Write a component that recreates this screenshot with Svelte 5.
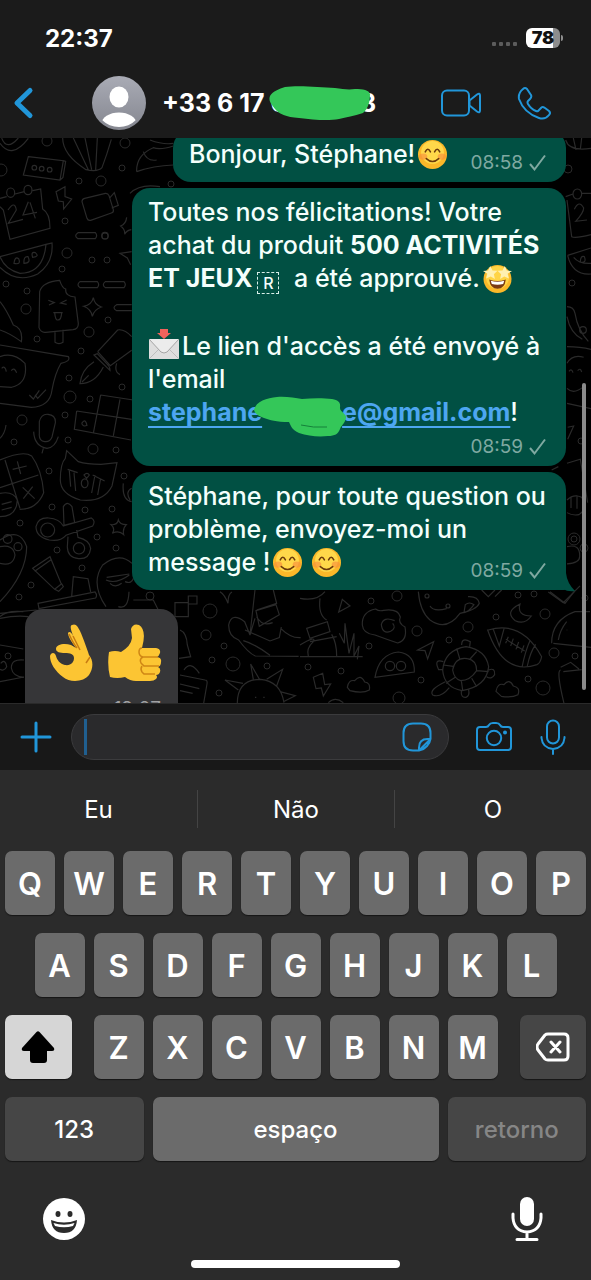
<script>
    const suggestions = ['Eu', 'Não', 'O'];
    const topRow = 'QWERTYUIOP'.split('');
    const middleRow = 'ASDFGHJKL'.split('');
    const bottomRow = 'ZXCVBNM'.split('');

    // small bubbles scattered over the wallpaper: [x, y, r]
    const dots = [
        [47, 3, 5], [1, 32, 6], [125, 5, 5], [122, 30, 3], [79, 43, 3], [101, 43, 5],
        [65, 83, 3], [105, 98, 3], [67, 115, 5], [92, 122, 3], [107, 122, 3], [62, 131, 3],
        [6, 146, 3], [27, 153, 3], [26, 171, 5], [108, 182, 3], [89, 194, 5], [37, 201, 3],
        [81, 213, 3], [69, 240, 3], [122, 249, 3], [70, 259, 6], [90, 261, 3], [65, 277, 3],
        [22, 282, 5], [14, 304, 3], [68, 302, 3], [93, 311, 5], [116, 312, 3], [49, 333, 3],
        [124, 338, 3], [52, 369, 3], [85, 372, 3], [112, 371, 3], [20, 385, 3], [97, 399, 3],
        [57, 412, 3], [116, 410, 3], [82, 430, 3], [31, 447, 3], [19, 459, 3], [8, 518, 3],
        [210, 473, 7], [206, 497, 5], [224, 508, 3], [212, 522, 3], [233, 526, 7], [219, 555, 3],
        [267, 528, 3], [371, 463, 3], [397, 458, 5], [417, 493, 5], [369, 508, 3], [449, 502, 3],
        [468, 489, 5], [496, 479, 3], [545, 476, 5], [554, 515, 5], [575, 518, 3], [528, 541, 3],
        [543, 550, 7], [308, 529, 3], [341, 533, 3], [421, 542, 3], [399, 560, 6], [518, 457, 3],
        [534, 456, 3], [572, 145, 3], [581, 303, 3], [574, 401, 3], [574, 401, 6], [568, 31, 4],
        [584, 410, 4], [585, 460, 3], [150, 458, 4], [171, 46, 3]
    ];
</script>

{#snippet smile()}
    <svg class="emoji" viewBox="0 0 28 28" role="img" aria-label="😊">
        <circle cx="14" cy="14" r="14" fill="#fbb829" />
        <circle cx="14" cy="12" r="11" fill="#ffd84a" />
        <ellipse cx="5" cy="16" rx="4" ry="3" fill="#f98a3c" opacity=".6" />
        <ellipse cx="23" cy="16" rx="4" ry="3" fill="#f98a3c" opacity=".6" />
        <path d="M7 11.500q2.500-5 5 0M16 11.500q2.500-5 5 0M8 18q6 5.500 12 0" fill="none" stroke="#6b3a0c" stroke-width="1.500" stroke-linecap="round" />
    </svg>
{/snippet}

{#snippet check()}
    <svg class="check" viewBox="0 0 18 18" aria-label="Envoyé" role="img">
        <path d="M2 10 6.500 15.500 17 1.500" />
    </svg>
{/snippet}

<main class="screen">
    <header>
        <div class="status">
            <time>22:37</time>
            <div class="indicators">
                <span class="signal"><i></i><i></i><i></i><i></i></span>
                <span class="battery"><b>78</b></span>
            </div>
        </div>
        <div class="contact">
            <button class="back" aria-label="Retour">
                <svg width="22" height="34" viewBox="0 0 22 34"><path d="M18 4.500 5 17l13 12.500" fill="none" stroke="#2196d9" stroke-width="5" stroke-linecap="round" stroke-linejoin="round" /></svg>
            </button>
            <svg class="avatar" viewBox="0 0 54 54" role="img" aria-label="Photo du contact">
                <defs>
                    <linearGradient id="grey" x2="0" y2="1"><stop stop-color="#a9abb5" /><stop offset="1" stop-color="#858790" /></linearGradient>
                    <clipPath id="round"><circle cx="27" cy="27" r="24" /></clipPath>
                </defs>
                <circle cx="27" cy="27" r="27" fill="url(#grey)" />
                <g fill="#fff" clip-path="url(#round)"><ellipse cx="27" cy="21" rx="9.500" ry="10.500" /><ellipse cx="27" cy="48" rx="17.500" ry="11.500" /></g>
            </svg>
            <h1>+33 6 17 0<span class="hidden-digits"><svg class="scribble" width="102" height="36" viewBox="0 0 102 36"><path d="M1 11C4 6 10 4 16 2c12-2 35 0 50 1 8 1 13 2 20 1 8 0 14 1 15 5 0 8-2 15-7 19-9 3-17 4-24 6-10 2-25 1-40-1-13-1-20-4-24-9C3 20-1 16 1 11z" /></svg></span>13</h1>
            <button class="call" aria-label="Appel vidéo">
                <svg width="40" height="28" viewBox="0 0 40 28"><rect x="1" y="1.500" width="27" height="25" rx="5" /><path d="M28.500 11.500 36 5.500q3-2 3 1v15q0 3-3 1l-7.500-6z" /></svg>
            </button>
            <button class="call" aria-label="Appel vocal">
                <svg width="34" height="34" viewBox="0 0 34 34"><path d="M6 3q2-2 4 0l4 6q1 2-1 4l-2 2q-1 1 0 3 3 5 8 7 2 1 3-1l2-2q1-2 4 0l4 3q2 2 0 4-4 5-10 3Q7 27 2 13 1 7 6 3z" /></svg>
            </button>
        </div>
    </header>

    <section class="chat">
        <svg class="wallpaper" viewBox="0 0 591 565" preserveAspectRatio="xMinYMin slice" aria-hidden="true">
            {#each dots as [x, y, r]}
                <circle cx={x} cy={y} r={r} />
            {/each}
            <!-- left side: popsicle, calendar, melon, pen -->
            <g transform="translate(0 -8) scale(.3333)" stroke-width="3.500">
                <path d="M85 80 190 92 180 150 70 135zM85 80 70 135M190 92l7 2-8 48-9 8M96 113a7 7 0 1 0 14 0 7 7 0 1 0-14 0M118 116a7 7 0 1 0 14 0 7 7 0 1 0-14 0M142 119a7 7 0 1 0 14 0 7 7 0 1 0-14 0" />
                <path d="M188 24q0 50 70 95 35 8 48-6 15-40 28-85M220 24l45 95M255 24l20 95M292 24l-5 95M0 40q35 50 85-15M5 24q15 40 50 0M410 125q-2-50 50-72 20 8 60-5M410 125q50-18 110-20M430 65q10 30 40 25M390 190q30-30 90-20M450 30q40 15 70 10" />
                <path d="M0 205l20-5M45 192l28-7M98 182l24-5 6 60q22 12 22 58L30 328 10 240 0 230M20 188a12 14 0 1 0 24 0 12 14 0 1 0-24 0M72 180a12 14 0 1 0 24 0 12 14 0 1 0-24 0M24 240q20-30 25 0L25 280l44-12M85 215l-16 40 42-8M90 217l16 48" />
                <path d="M168 185l27-15 0 30 20 7-24 30-1-22-15-2zM246 215q0-8 8-10l62-15q8-1 11 7l13 42q2 8-6 10l-62 22q-8 2-11-6zM328 205l15-17 12 38-20 8M234 308h52q8 9 0 18h-52q-14-9 0-18zM305 317a10 10 0 1 0 20 0 10 10 0 1 0-20 0" />
                <path d="M0 380 138 343l18-4q5 60-43 93Q50 462 0 412M0 380q15 38 60 50 70 0 78-87M42 400q2-22 14-14 8 20-14 14zM72 400q-2-22 12-20 10 20-12 20zM98 382q-6-18 8-14 14 12-8 14z" />
                <path d="M119 485q8-30 60-34 8 24 18 26-2 22 28 24l10 80q0 16-16 18l-82 8q-14 2-20-14zM165 602v35q12 8 24 0v-38M145 511l18 7-16 7M200 510l-18 9 18 4M160 548h28M164 548q2 24 10 22 10 0 11-22M240 455h52q8 9 0 18h-52q-12-9 0-18zM316 455h56q8 9 0 18h-56q-12-9 0-18zM395 524h-45q-16 9 0 18h45" />
                <path d="M280 503q4 22 24 28-22 8-27 28-4-22-26-30 24-4 29-26zM380 262q-2 20-18 26 14 10 12 25 6-12 20-14M395 365l-35 5 22 14 10 20M293 665l60-65q20-4 42 20M293 665l38 42 64-46M282 675l48 46q0-12-10-20l-28-30zM282 695q-38 24-42 66 45 0 70-50M246 756l20-20M350 700q-8 26 10 34" />
                <path d="M0 645 205 680q8 14-22 20-18 30-27 80-6 50-62 52L0 820M0 680q40-15 75 20 10 60-40 72L0 770M5 715q10-10 14 10M34 722q8-12 16 6M88 795l12 12 18-26M105 795l8 10 25-26M0 515q20 25 40 70 30 10 24 50Q30 610 0 600" />
                <path d="M118 875q6-24 26-22 24 2 22 26l-10 42q-6 16-22 14-18-2-16-24zM101 905q2 44 40 50 24-2 34-35M130 955l-4 15M302 795 400 810M302 795 280 910M230 843l165 25M230 843l-7 55 170 32M360 808l-20 110M245 880q12-18 16 8M245 880q4 12 16 6M0 925q15-15 18-40" />
            </g>
            <g transform="translate(0 302) scale(.3333)" stroke-width="3.500">
                <path d="M0 60q70-30 95-12 30 40 36 110-20 50-72 50M15 60l45 145M0 143 115 105M38 88l42-10M52 64l10 38M68 142l36 34M98 140l-28 36M0 160q40-8 52 20-2 50-52 50M5 193l30-8M5 210l30-8" />
                <path d="M200 32 235 65q25 8 68 8l48-5-15 70q-25 50-95 42-60-18-60-60 0-50 15-65zM203 88l30 10M208 92l4 48M222 98l5 55M278 105l36 18M285 105l-10 54M302 115l-9 50M252 105q10-10 16 0l-8 10zM244 130a9 12 0 1 0 20 0 9 12 0 1 0-20 0" />
                <path d="M190 200q12-20 26 0l8 48-32 8zM190 258l84-24q14 8 4 24l-80 28q-18 20-50 14-40-10-40-40 6-28 38-26 32 2 44 24zM122 270a21 21 0 1 0 42 0 21 21 0 1 0-42 0M230 270l4 22q36 8 38 34-4 32-36 30-34-4-34-36l2-30M220 325a17 17 0 1 0 34 0 17 17 0 1 0-34 0" />
                <path d="M98 385 150 350l34 82-20 16zM104 394 152 360M164 448l12 6 14-14-6-10M355 240q4 14 24 14-12 12-8 30-14-14-34-4 10-14-4-26 18 2 22-14zM114 490 285 456q8 10 2 18l-170 32zM215 470l5-60 44 6 8 40M395 185q-30-5-25-55M395 145q-20 10-5 35" />
                <path d="M0 300q60-40 80 20Q80 400 0 485M0 320q40-8 45 25-5 35-45 25M10 297a12 12 0 1 0 26 0 12 12 0 1 0-26 0M42 320a12 12 0 1 0 24 0 12 12 0 1 0-24 0" />
                <path d="M318 500q-48-70-10-125 50-40 88-5M318 420q30 14 70-15M320 412l68-10M330 430q15 15 35 0M375 425q20 8 25-10M355 500q30 10 32-45M400 480h60l30 60M0 520l110-10M0 535q50-10 85-5" />
            </g>
            <g transform="translate(0 452) scale(.3333)" stroke-width="3.500">
                <path d="M0 80q20-20 70-15M0 165l70 12M0 275l72-14M2 220q14-15 18 10-8 15-20 8M72 210q-38-4-38 24 4 26 38 28M525 38h40v42h-40zM565 18h26v24h-26zM540 120q20 8 22 45l10 35-35 5M552 240q20-30 46 10M540 255l75 15q8 0 6 12l-10 58M540 282l58 14M540 302l38 8" />
                <path d="M660 5q14 8 24 35 0-28 12-34M765 0l-15 135 15-50M820 0l10 40-60 20M768 62l60-18 10 30-60 35zM750 135 734 95q-40-30-48 10 0 35 30 45 30 40 50 48l130 1M735 120l75 33 28-10 6-32M842 115q30 30 60 28M770 80q16 30 48 18M730 152q35 10 80 44" />
                <path d="M712 340q0-72 70-72 60 6 70 70M760 268l-8-46 26 45M715 300l-40-30 54 10M800 268l48-30-18 50M840 305l46 12-36 18M765 322h4M790 322h4" />
            </g>
            <g transform="translate(300 452) scale(.3333)" stroke-width="3.500">
                <path d="M0 25q50 10 75-20M60 25q-6 50 20 65M20 115l62-20 8 30-60 20zM0 165q50-30 40-10-22 20-15 44M0 200h188M110 198q0-40-15-65M30 155l80-15M118 130l15 30 2-60 12 90 15-60 0 68 15-30-5 40M127 28l23 20-34 18z" />
                <path d="M187 105q-2-40 40-48 10 8 24 4 44-6 50 20-8 18 14 30 8 40-22 48-30-10-68-24-36-4-38-30zM284 92q-34-14-40 12 4 30 28 20 18-10 6-24" />
                <path d="M355 5q5 60 35 85 50 35 90-20 50-10 58-30-4-22-34-20M492 68q14-2 30-24-14-10-26 0zM375 18a6 6 0 1 0 12 0 6 6 0 1 0-12 0M438 48a6 6 0 1 0 12 0 6 6 0 1 0-12 0M390 48q10 18 50 8M225 262q12-70 70-76 50 6 48 60zM256 228a14 14 0 1 0 28 0 14 14 0 1 0-28 0M289 228a14 14 0 1 0 28 0 14 14 0 1 0-28 0M353 180l48-25-18 52-8-25z" />
                <path d="M428 240q6-60 70-70 60 10 68 60-6 60-80 72-54-10-58-62zM458 240q8-40 44-34 28 4 28 36-20 30-48 30-20-6-24-32zM470 175l10 34M530 185l-20 22M566 245l-36-3M530 290l-15-25M488 300l-4-28M438 280l28-18M430 225l30 4M485 165q0-24 26-10l-2 15M430 215q-30-10-14 24h14M566 240q20-8 18 14-10 16-24 6M436 275q-50 24-38 40 24 10 50-22M484 302q-2 22 14 20 12-4 8-22" />
                <path d="M565 120q100-30 160 80-4 20-14 24-100 35-148-104zM580 118l18 50 15-55M682 228q8-40 25-65M666 232q10-50 24-80M618 148l56 35M625 140l-8 20M640 146l-8 22M656 156l-8 22M672 166l-8 22M660 42q-10 35 34 36-20 28-48 14-34-26 14-50zM40 262l28-12 6 34 18-2-22 36-6-24-16 2zM142 292q4-24 22-20 18-22 30 4 18 2 14 24-20 12-58 2zM588 304q4-26 24-20 16-20 28 4 22 4 14 26-18 10-50 5zM85 338q20-20 45 0M755 160q0-70 70-95l45 0M760 160l113 12M775 150q5-30 25-55M800 120h2M782 240q-14 0 10 100M782 232l30-15 25 20M790 245l55-6M750 5l45 35 30-38M545 0l20 20 20-20M585 20l20-20" />
            </g>
            <!-- narrow strip right of the bubbles -->
            <g transform="translate(545 -8) scale(.3333)" stroke-width="3.500">
                <path d="M62 30q10 35 76 25M85 24l8 36M110 24l-4 34M62 200l22-8M110 190h28M84 192a13 15 0 1 0 26 0 13 15 0 1 0-26 0M66 210l14 110q10 6 58-6M88 238q14-30 28-4 0 14-24 40l34-4" />
                <path d="M68 376l70-22M68 376q14 60 70 56M86 382q16 20 52 18M106 396q0-20 12-16 8 20-12 16zM66 530q20 0 24 20 8 50 40 84M66 560q10 50 46 68M104 600a10 10 0 1 0 20 0 10 10 0 1 0-20 0M66 650q40 0 72 8M66 700q16-28 50-18M66 775q20 20 50-5M72 724q8-10 12 4M98 722q8-10 12 4" />
                <path d="M66 820l72 16M68 892l18-4-18 40M66 1000l40-12 22 130M66 1110q20-20 44-8 24 30-8 52-20 4-36-6M78 1100v34M96 1096v40M66 1250q40-10 38 30 0 20-38 22M10 1386l45 32 50-50M40 1010l-20 10" />
            </g>
        </svg>

        <div class="messages">
            <article class="bubble sent short">
                <p>Bonjour, Stéphane!{@render smile()}</p>
                <footer class="tucked"><time>08:58</time>{@render check()}</footer>
            </article>

            <article class="bubble sent">
                <p>
                    Toutes nos félicitations! Votre achat du produit <strong>500 ACTIVITÉS ET JEUX</strong><span class="boxed">R</span> a été approuvé.<svg class="emoji" viewBox="0 0 28 28" role="img" aria-label="🤩">
                        <circle cx="14" cy="14.500" r="13.500" fill="#fbb829" />
                        <circle cx="14" cy="13" r="11" fill="#ffd445" />
                        <path d="M6 15q8 3 16 0-1 9-8 9t-8-9z" fill="#7a3a12" />
                        <path d="M7.500 16.200q6.500 2 13 0l-1 3q-5.500 1.500-11 0z" fill="#fff" />
                        <path d="M7 2l2.200 4.300 4.800.2-3.500 3.300 1 4.700-4-2.500-4.500 2 1.200-4.500L0 6.800l5-.5zM21 2l2 4.300 5 .5-4.200 2.700 1.200 4.500-4.500-2-4 2.500 1-4.700L14 6.500l4.800-.2z" fill="#fff0b0" />
                    </svg>
                </p>
                <p>
                    <svg class="mail" viewBox="0 0 32 32" role="img" aria-label="📩">
                        <path d="M1 11h30v20H1z" fill="#dedede" />
                        <path d="M1 31l11-11M31 31 20 20" stroke="#bdbdbd" />
                        <path d="M1 11l12 13q3 2 6 0l12-13" fill="#ececec" stroke="#a5a5a5" />
                        <path d="M12 1h8v4h3l-7 6-7-6h3z" fill="#f0635c" />
                    </svg>Le lien d'accès a été envoyé à l'email<br />
                    <a href="mailto:stephane@gmail.com">stephane<span class="hidden-letters"><svg class="scribble" width="93" height="42" viewBox="0 0 93 42"><path d="M0 14C2 5 13 2 23 1c8-1 18 1 25 2 10-1 22-1 30 0 6 1 9 3 8 9 0 4 7 6 6 10-1 5-5 8-6 11-2 5-5 7-12 7-10 1-20 0-29-3-7-3-8-7-10-11C22 26 16 24 10 22 5 20 1 18 0 14z" /><path class="ink" d="M47 29q12 3 26 2" /></svg></span>e@gmail.com</a>!
                </p>
                <footer><time>08:59</time>{@render check()}</footer>
            </article>

            <article class="bubble sent last">
                <p>Stéphane, pour toute question ou problème, envoyez-moi un message !{@render smile()} {@render smile()}</p>
                <footer class="tucked"><time>08:59</time>{@render check()}</footer>
                <svg class="tail" width="20" height="22" viewBox="0 0 20 22"><path d="M0 0h10v3q1 10 9 18-7 1-12-2-3 1-7 1z" /></svg>
            </article>

            <article class="bubble received">
                <div class="hands">
                    <svg width="44" height="58" viewBox="0 0 44 58" role="img" aria-label="👌">
                        <path d="M23 1c4-2 6 2 8 6 4 9 7 18 9 24 5 6 4 14 0 20-5 7-19 8-26 2C6 47 1 39 1 32c1-4 5-4 6 0 1 4 4 8 9 9 6 1 9-3 9-7 0-4-4-5-9-5-5 0-9-1-9-4 0-5 9-6 15-4l5 3C24 20 19 13 19 9c1-2 3-1 4 1l1 2c-1-4-4-10-1-11z" fill="#fcc533" />
                        <path d="M24 12q4 8 7 14M20 10q4 9 8 14M41 33l-4 6" fill="none" stroke="#c87b12" stroke-width="1.500" />
                    </svg>
                    <svg width="54" height="58" viewBox="0 0 54 58" role="img" aria-label="👍">
                        <path d="M1 28q6-2 12 0 10-6 11-14l-1-9q2-6 8-4 8 5 3 23h14q5 1 4 5-1 3-3 4 5 1 4 5 0 4-3 5 3 1 2 5-1 3-4 3 2 2 0 4-2 2-6 2H28q-6 0-11-4-8 2-15 0-3-12-1-25z" fill="#fcc533" />
                        <path d="M34 24q-3 0-3 4t4 5h15M35 33q-4 2-2 6l3 3h15M34 42q-2 3 0 6l2 2h11" fill="none" stroke="#cf8615" stroke-width="1.500" />
                    </svg>
                </div>
                <footer><time>19:07</time></footer>
            </article>
        </div>
        <span class="scrollbar"></span>
    </section>

    <form class="composer" on:submit|preventDefault>
        <button type="button" aria-label="Joindre">
            <svg class="plus" width="32" height="32" viewBox="0 0 32 32"><path d="M16 2v28M2 16h28" /></svg>
        </button>
        <div class="field">
            <span class="caret"></span>
            <input type="text" aria-label="Message" />
            <button type="button" aria-label="Autocollants">
                <svg width="30" height="30" viewBox="0 0 30 30"><path d="M17 28.500h-6q-9.500 0-9.500-9.500v-8q0-9.500 9.500-9.500h8q9.500 0 9.500 9.500v6zM17 28.500v-3q0-8.500 8.500-8.500h3M17 28.500q5-1 8-4.500 3-3 3.500-7" /></svg>
            </button>
        </div>
        <button type="button" aria-label="Appareil photo">
            <svg width="36" height="30" viewBox="0 0 36 30"><path d="M4 5h6q2 0 3-2t4-2h3q3 0 4 2t3 2h5q3 0 3 3v17q0 3-3 3H4q-3 0-3-3V8q0-3 3-3z" /><circle cx="18" cy="16" r="7.200" /><circle cx="29" cy="10.500" r="1" fill="#2196d9" /></svg>
        </button>
        <button class="voice" type="button" aria-label="Message vocal">
            <svg width="26" height="36" viewBox="0 0 26 36"><rect x="7" y="1.500" width="12" height="23" rx="6" /><path d="M1.500 18v1q1 10 11.500 11 10.500-1 11.500-11v-1M13 30v5" /></svg>
        </button>
    </form>

    <section class="keyboard">
        <div class="suggestions">
            {#each suggestions as word}
                <button>{word}</button>
            {/each}
        </div>
        <div class="keys">
            {#each topRow as letter}
                <button class="key">{letter}</button>
            {/each}
            {#each middleRow as letter}
                <button class="key" class:indent={letter === 'A'}>{letter}</button>
            {/each}
            <button class="key shift" aria-label="Maj">
                <svg width="34" height="34" viewBox="0 0 34 34"><path d="M15.500 2q1.500-1.500 3 0L33 18q1 3-2 3h-5v9q0 3-3 3H12q-3 0-3-3v-9H3q-3 0-2-3z" fill="#000" /></svg>
            </button>
            {#each bottomRow as letter}
                <button class="key" class:third={letter === 'Z'}>{letter}</button>
            {/each}
            <button class="key delete" aria-label="Effacer">
                <svg width="34" height="30" viewBox="0 0 34 30" fill="none" stroke="#fff" stroke-width="3" stroke-linejoin="round" stroke-linecap="round"><path d="M12 2h16q4 0 4 4v18q0 4-4 4H12q-2 0-3-1l-7-9q-2-3 0-6l7-9q1-1 3-1zM15 10l9 10M24 10l-9 10" /></svg>
            </button>
            <button class="key wide">123</button>
            <button class="key space">espaço</button>
            <button class="key wide return">retorno</button>
        </div>
        <div class="tools">
            <button aria-label="Emoji">
                <svg width="42" height="42" viewBox="0 0 42 42"><circle cx="21" cy="21" r="21" fill="#fff" /><g fill="#2b2b2b"><ellipse cx="15" cy="16" rx="2.500" ry="3" /><ellipse cx="27" cy="16" rx="2.500" ry="3" /><path d="M8 22q13 5 26 0-1 13-13 13T8 22z" /></g><path d="M10.500 25q10.500 3.500 21 0l-1.500 3q-9 2.500-18 0z" fill="#fff" /></svg>
            </button>
            <button aria-label="Dictée">
                <svg width="32" height="46" viewBox="0 0 32 46" fill="none" stroke="#fff" stroke-width="3" stroke-linecap="round"><rect x="9" y="1" width="14" height="29" rx="7" fill="#fff" stroke="none" /><path d="M2 18v4q1 13 14 14 13-1 14-14v-4M16 36v7M6 43.500h20" /></svg>
            </button>
        </div>
        <div class="home"></div>
    </section>
</main>

<style>
    :global(body) {
        margin: 0;
        background: #000;
    }

    .screen {
        display: flex;
        flex-direction: column;
        height: 100vh;
        color: #fff;
        font-family: Inter, Roboto, "Liberation Sans", sans-serif;
    }

    button {
        display: flex;
        align-items: center;
        justify-content: center;
        padding: 0;
        border: 0;
        background: none;
        color: inherit;
        font: inherit;
        cursor: pointer;
    }

    svg {
        flex-shrink: 0;
    }

    header {
        background: #1b1b1b;
    }

    .status {
        display: flex;
        align-items: center;
        justify-content: space-between;
        height: 60px;
        padding: 8px 31px 0 45px;
        font-size: 24px;
        font-weight: 700;
    }

    .indicators, .signal {
        display: flex;
        align-items: center;
    }

    .signal {
        gap: 3px;
        margin: 11px 9px 0 0;
    }

    .signal i {
        width: 4px;
        height: 4px;
        border-radius: 1px;
        background: #5c5c5c;
    }

    .battery {
        position: relative;
        width: 34px;
        height: 20px;
        border-radius: 6px;
        background: linear-gradient(90deg, #fff 78%, #8d8d8d 78%);
        color: #111;
        font-size: 18px;
        line-height: 20px;
        text-align: center;
    }

    .battery::after {
        content: "";
        position: absolute;
        top: 7px;
        right: -3px;
        width: 2px;
        height: 6px;
        border-radius: 0 2px 2px 0;
        background: #8d8d8d;
    }

    .contact {
        display: flex;
        align-items: center;
        height: 70px;
        padding: 0 40px 0 12px;
    }

    .back {
        margin-right: 58px;
    }

    .avatar {
        width: 54px;
        height: 54px;
        margin-right: 16px;
    }

    h1 {
        flex: 1;
        margin: 0;
        font-size: 25px;
        font-weight: 700;
        white-space: nowrap;
    }

    .hidden-digits, .hidden-letters {
        position: relative;
        display: inline-block;
        width: 62px;
    }

    .scribble {
        position: absolute;
        left: -18px;
        bottom: -9px;
        fill: #34c759;
    }

    .hidden-letters {
        width: 80px;
    }

    .hidden-letters .scribble {
        left: -8px;
        bottom: -17px;
    }

    .ink {
        fill: none;
        stroke: #14813a;
    }

    .call {
        margin-left: 36px;
    }

    .call svg, .composer svg {
        fill: none;
        stroke: #2196d9;
        stroke-width: 2;
        stroke-linejoin: round;
        stroke-linecap: round;
    }

    .composer .plus {
        stroke-width: 3;
    }

    .chat {
        position: relative;
        flex: 1;
        min-height: 0;
        overflow: hidden;
        background: #000;
    }

    .wallpaper {
        position: absolute;
        top: 0;
        left: 0;
        width: 100%;
        height: 100%;
        fill: none;
        stroke: #2a2a2a;
    }

    .messages {
        position: relative;
        display: flex;
        flex-direction: column;
        align-items: flex-end;
        gap: 6px;
        margin-top: -8px;
        padding: 0 25px;
    }

    .bubble {
        position: relative;
        box-sizing: border-box;
        max-width: 434px;
        padding: 8px 14px 7px 16px;
        border-radius: 18px;
        background: #015043;
        color: #f4fffc;
        font-size: 25px;
        font-weight: 500;
        line-height: 33px;
    }

    .short {
        width: 393px;
    }

    .last {
        border-bottom-right-radius: 2px;
    }

    p {
        margin: 0;
    }

    p + p {
        margin-top: 35px;
    }

    strong, a {
        font-weight: 700;
    }

    a {
        color: #4da6f0;
        text-underline-offset: 5px;
        text-decoration-thickness: 2px;
    }

    .boxed {
        display: inline-block;
        width: 20px;
        height: 20px;
        margin: 0 8px 0 5px;
        border: 1px dashed #d8efe9;
        font-size: 16px;
        line-height: 20px;
        text-align: center;
        vertical-align: -2px;
    }

    .emoji {
        width: 29px;
        height: 29px;
        margin: -4px 0 -4px 3px;
        vertical-align: -2px;
    }

    .mail {
        width: 32px;
        height: 32px;
        margin: -4px 2px -4px 0;
        vertical-align: -1px;
        fill: none;
    }

    footer {
        display: flex;
        align-items: center;
        justify-content: flex-end;
        gap: 5px;
        margin-top: 6px;
        padding-right: 6px;
        color: #7fa9a1;
        font-size: 19px;
        font-weight: 400;
        line-height: 24px;
    }

    .tucked {
        margin-top: -20px;
    }

    .check {
        width: 18px;
        height: 18px;
        fill: none;
        stroke: #7fa9a1;
        stroke-width: 2;
    }

    .tail {
        position: absolute;
        right: -10px;
        bottom: -2px;
        fill: #015043;
    }

    .received {
        align-self: flex-start;
        margin-top: 13px;
        background: #363638;
    }

    .hands {
        display: flex;
        gap: 15px;
        padding: 7px 2px 9px 8px;
    }

    .received footer {
        padding-right: 3px;
        color: #a0a0a2;
    }

    .scrollbar {
        position: absolute;
        right: 5px;
        top: 245px;
        bottom: 13px;
        width: 4px;
        border-radius: 2px;
        background: #8a8a8a;
    }

    .composer {
        display: flex;
        align-items: center;
        height: 67px;
        padding: 0 25px 0 20px;
        background: #181818;
        border-top: 1px solid #2a2a2a;
        box-sizing: border-box;
    }

    .field {
        display: flex;
        flex: 1;
        align-items: center;
        min-width: 0;
        height: 44px;
        margin: 0 27px 0 19px;
        padding: 0 16px 0 12px;
        border: 1px solid #3b3b3d;
        border-radius: 23px;
        background: #2a2a2c;
    }

    .caret {
        width: 3px;
        height: 36px;
        background: #205f90;
    }

    input {
        flex: 1;
        min-width: 0;
        padding: 0;
        border: 0;
        outline: 0;
        background: none;
        color: #fff;
        font: inherit;
        font-size: 24px;
    }

    .voice {
        margin-left: 28px;
    }

    .keyboard {
        padding: 12px 5px;
        background: #2b2b2b;
    }

    .suggestions {
        display: grid;
        grid-template-columns: repeat(3, 1fr);
        margin: 8px -5px 23px;
    }

    .suggestions button {
        height: 38px;
        font-size: 24px;
    }

    .suggestions button + button {
        border-left: 1px solid #444;
    }

    .keys {
        display: grid;
        grid-template-columns: repeat(20, 1fr);
        gap: 18px 9px;
    }

    .key {
        grid-column: span 2;
        height: 64px;
        border-radius: 7px;
        background: #6b6b6b;
        box-shadow: 0 1px 1px #161616;
        font-size: 31px;
        font-weight: 600;
    }

    .indent {
        grid-column: 2 / span 2;
    }

    .shift, .delete, .wide {
        background: #464646;
    }

    .shift {
        grid-column: 1 / span 3;
        margin-right: 13px;
        background: #d6d6d6;
    }

    .third {
        grid-column: 4 / span 2;
    }

    .delete {
        grid-column: span 3;
        margin-left: 13px;
    }

    .wide {
        grid-column: span 5;
    }

    .space {
        grid-column: span 10;
    }

    .wide, .space {
        font-size: 24px;
        font-weight: 500;
    }

    .return {
        color: #868686;
    }

    .tools {
        display: flex;
        align-items: center;
        justify-content: space-between;
        margin: 35px 43px 18px 38px;
    }

    .home {
        width: 36%;
        height: 8px;
        margin: 0 auto;
        border-radius: 4px;
        background: #fff;
    }
</style>
